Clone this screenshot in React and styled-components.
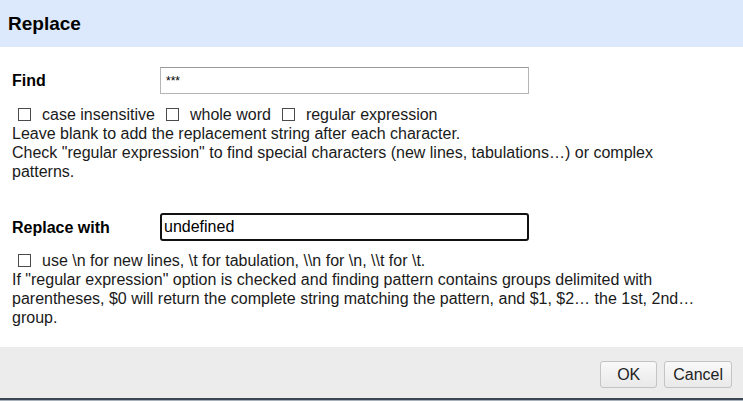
import React from 'react';
import styled, { createGlobalStyle } from 'styled-components';

const GlobalStyle = createGlobalStyle`
  html, body {
    margin: 0;
    padding: 0;
    background: #ffffff;
  }
  body {
    font-family: "Liberation Sans", Arial, sans-serif;
    color: #1a1a1a;
  }
`;

const Dialog = styled.div`
  width: 743px;
  height: 401px;
  display: flex;
  flex-direction: column;
  overflow: hidden;
  background: #ffffff;
`;

const Header = styled.header`
  height: 47px;
  flex-shrink: 0;
  display: flex;
  align-items: center;
  padding: 0 8px;
  background: #dce9fc;
`;

const Title = styled.h1`
  margin: 0;
  font-size: 19px;
  font-weight: bold;
  color: #000;
`;

const Body = styled.section`
  flex: 1;
  padding: 20px 12px 0 12px;
  font-size: 16px;
  line-height: 19px;
`;

const FieldRow = styled.div`
  display: grid;
  grid-template-columns: 148px 369px;
  align-items: center;
  margin-top: ${(p) => p.$top || 0}px;
  margin-bottom: ${(p) => p.$bottom || 0}px;
`;

const Label = styled.label`
  font-weight: bold;
  font-size: 16px;
  color: #000;
`;

const TextInput = styled.input`
  box-sizing: border-box;
  width: 100%;
  height: ${(p) => (p.$focused ? 28 : 27)}px;
  margin: 0;
  padding: 0 ${(p) => (p.$focused ? 2 : 5)}px;
  font-family: "Liberation Sans", Arial, sans-serif;
  font-size: ${(p) => (p.$focused ? 16 : 12)}px;
  color: #000;
  background: #fff;
  border: ${(p) => (p.$focused ? '2px solid #111' : '1px solid #b5b5b5')};
  border-top-color: ${(p) => (p.$focused ? '#111' : '#999')};
  border-radius: ${(p) => (p.$focused ? 3 : 0)}px;
  outline: none;
`;

const Options = styled.div`
  display: flex;
  align-items: center;
  gap: 5px;
  height: 19px;
`;

const Option = styled.label`
  display: inline-flex;
  align-items: center;
`;

const Box = styled.span`
  display: inline-block;
  box-sizing: border-box;
  width: 13px;
  height: 13px;
  margin: 0 11px 0 6px;
  border: 1px solid #4a4a4a;
  background: #fff;
`;

const Help = styled.p`
  margin: 0;
  max-width: 700px;
`;

const Footer = styled.footer`
  height: 51px;
  flex-shrink: 0;
  box-sizing: border-box;
  display: flex;
  justify-content: flex-end;
  align-items: flex-start;
  gap: 7px;
  padding: 14px 11px 0 11px;
  background: #ececec;
`;

const Button = styled.button`
  box-sizing: border-box;
  min-width: 57px;
  height: 27px;
  padding: 0 8px;
  font-family: "Liberation Sans", Arial, sans-serif;
  font-size: 16px;
  color: #222;
  background: linear-gradient(#f9f9f9, #e9e9e9);
  border: 1px solid #c4c4c4;
  border-radius: 3px;
`;

const PageEdge = styled.div`
  height: 3px;
  flex-shrink: 0;
  box-sizing: border-box;
  border-top: 2px solid #3b4757;
  background: #a8b0b9;
`;

const Check = ({ children }) => (
  <Option>
    <Box />
    {children}
  </Option>
);

export default function App() {
  return (
    <>
      <GlobalStyle />
      <Dialog>
        <Header>
          <Title>Replace</Title>
        </Header>
        <Body>
          <FieldRow $bottom={11}>
            <Label>Find</Label>
            <TextInput defaultValue="***" />
          </FieldRow>
          <Options>
            <Check>case insensitive</Check>
            <Check>whole word</Check>
            <Check>regular expression</Check>
          </Options>
          <Help>Leave blank to add the replacement string after each character.</Help>
          <Help>
            Check "regular expression" to find special characters (new lines, tabulations…) or complex
            patterns.
          </Help>
          <FieldRow $top={32} $bottom={10}>
            <Label>Replace with</Label>
            <TextInput $focused defaultValue="undefined" />
          </FieldRow>
          <Options>
            <Check>use \n for new lines, \t for tabulation, \\n for \n, \\t for \t.</Check>
          </Options>
          <Help>
            If "regular expression" option is checked and finding pattern contains groups delimited with
            parentheses, $0 will return the complete string matching the pattern, and $1, $2… the 1st, 2nd…
            group.
          </Help>
        </Body>
        <Footer>
          <Button>OK</Button>
          <Button>Cancel</Button>
        </Footer>
        <PageEdge />
      </Dialog>
    </>
  );
}
